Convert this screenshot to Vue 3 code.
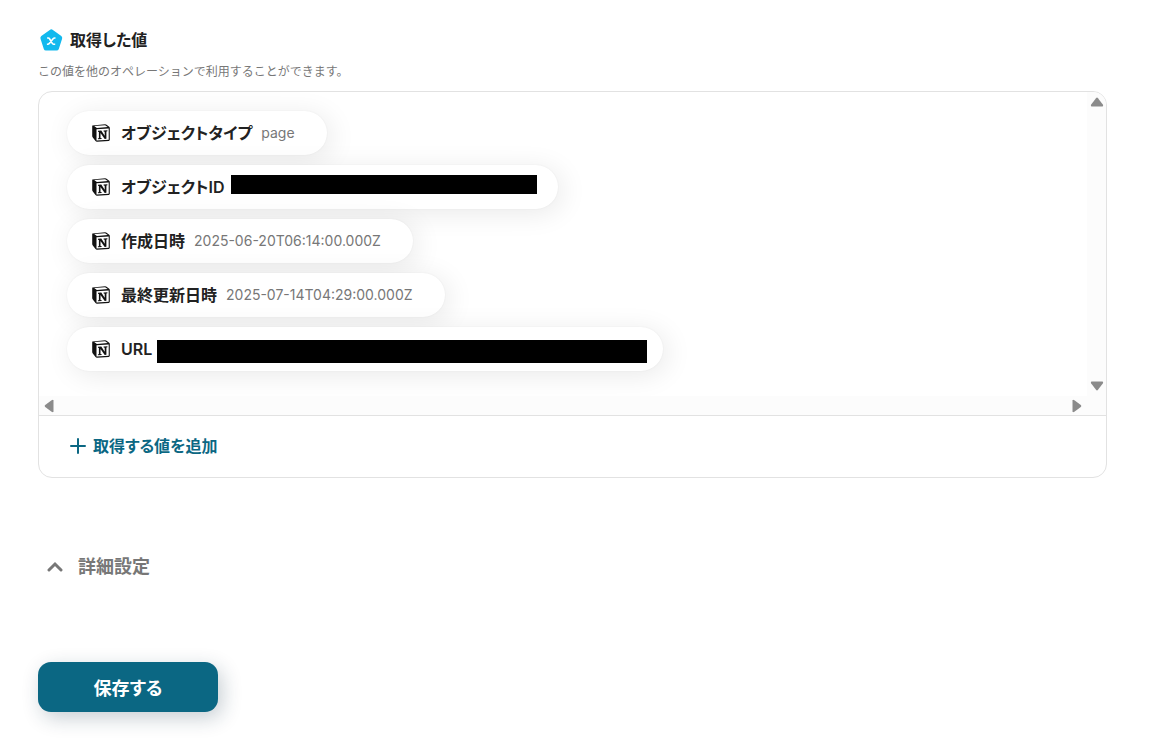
<template>
  <main class="page">
    <section class="outputs">
      <header class="heading">
        <svg class="heading-icon" viewBox="0 0 24 24" aria-hidden="true">
          <path
            d="M10.8 1.9 2.3 8.1Q1 9.1 1.5 10.7L4.8 21Q5.3 22.6 7 22.6H17.6Q19.3 22.6 19.8 21L23.1 10.7Q23.6 9.1 22.3 8.1L13.9 1.9Q12.3 .7 10.8 1.9Z"
            fill="#12b9ee"
          />
          <path
            d="M8.1 10H9.2Q10.2 10 10.7 11L13.1 15.2Q13.7 16.2 14.6 16.2H16.2M16.5 10H15.6Q14.8 10 14.1 10.8L10.3 15.4Q9.6 16.2 8.8 16.2H7.9"
            fill="none"
            stroke="#fff"
            stroke-width="1.6"
          />
        </svg>
        <h2 class="heading-title">取得した値</h2>
      </header>
      <p class="description">この値を他のオペレーションで利用することができます。</p>

      <div class="panel">
        <div class="scroll-area">
          <ul class="value-list">
            <li v-for="item in items" :key="item.label" class="value-chip">
              <svg class="chip-icon" viewBox="0 0 18 18" aria-hidden="true">
                <path
                  d="M.4 1.4 13.2.3Q14 .3 14.6.8L17.2 2.8Q17.8 3.3 17.8 4.1V15.7Q17.8 16.8 16.7 16.9L5 17.7Q4.1 17.7 3.5 17L.8 13.6Q.2 12.8.2 12V2.2Q.2 1.4.4 1.4Z"
                  fill="#111"
                />
                <path
                  d="M2.2 2.1 13.1 1.3 15.7 3.1 4.9 3.9ZM4.5 5.2 16.7 4.4V15.8L4.5 16.6Z"
                  fill="#fff"
                />
                <path
                  d="M6 6.8 9.3 6.6 12.7 11.8V7.8L11.6 7.5V6.5L15.4 6.3V7.2L14.4 7.6V14.7L12.7 14.9 8.5 8.9V13.9L9.7 14.2V15.1L5.9 15.3V14.4L6.9 14V8L6 7.7Z"
                  fill="#111"
                />
              </svg>
              <span class="chip-label">{{ item.label }}</span>
              <span v-if="item.value" class="chip-value">{{ item.value }}</span>
              <span v-else class="chip-masked" :style="{ width: item.width + 'px' }">
                <span class="mask" :class="item.mask"></span>
              </span>
            </li>
          </ul>
          <div class="track track-vertical">
            <button type="button" class="track-button" aria-label="上へスクロール">
              <svg viewBox="0 0 14 14"><path :d="arrow" /></svg>
            </button>
            <button type="button" class="track-button" aria-label="下へスクロール">
              <svg class="down" viewBox="0 0 14 14"><path :d="arrow" /></svg>
            </button>
          </div>
          <div class="track track-horizontal">
            <button type="button" class="track-button" aria-label="左へスクロール">
              <svg class="left" viewBox="0 0 14 14"><path :d="arrow" /></svg>
            </button>
            <button type="button" class="track-button" aria-label="右へスクロール">
              <svg class="right" viewBox="0 0 14 14"><path :d="arrow" /></svg>
            </button>
          </div>
          <div class="track"></div>
        </div>
        <footer class="panel-footer">
          <button type="button" class="add-button">
            <svg class="add-icon" viewBox="0 0 16 16" aria-hidden="true">
              <path d="M8 1V15M1 8H15" fill="none" stroke="#0b6783" stroke-width="2" stroke-linecap="round" />
            </svg>
            取得する値を追加
          </button>
        </footer>
      </div>
    </section>

    <button type="button" class="advanced" :aria-expanded="open" @click="open = !open">
      <svg class="advanced-icon" viewBox="0 0 16 16" aria-hidden="true">
        <path d="M2 11 8 5 14 11" fill="none" stroke="#777" stroke-width="3" stroke-linecap="round" />
      </svg>
      詳細設定
    </button>

    <button type="button" class="save">保存する</button>
  </main>
</template>

<script setup>
import { ref } from "vue";

const open = ref(false);

const arrow = "M6 3.2Q7 2 8 3.2L12.8 9.6Q13.8 11.5 12.4 11.5H1.6Q.2 11.5 1.2 9.6Z";

const items = [
  { label: "オブジェクトタイプ", value: "page" },
  { label: "オブジェクトID", width: 293, mask: "mask-id" },
  { label: "作成日時", value: "2025-06-20T06:14:00.000Z" },
  { label: "最終更新日時", value: "2025-07-14T04:29:00.000Z" },
  { label: "URL", width: 470, mask: "mask-url" }
];
</script>

<style>
body {
  margin: 0;
  background: #fff;
}
</style>

<style scoped>
.page {
  padding: 28px 43px 32px 38px;
  color: #222;
  font-family: Inter, "Noto Sans CJK JP", sans-serif;
  font-feature-settings: "palt";
}

button {
  border: 0;
  padding: 0;
  background: none;
  font-family: inherit;
  font-feature-settings: inherit;
  cursor: pointer;
}

svg {
  display: block;
  flex: none;
}

.heading {
  display: flex;
  align-items: center;
  gap: 7px;
  height: 24px;
  padding-left: 1px;
}

.heading-icon {
  width: 24px;
  height: 24px;
}

.heading-title {
  margin: 0;
  font-size: 16px;
  font-weight: 600;
  line-height: 24px;
}

.description {
  margin: 10px 0 9px;
  color: #777;
  font-size: 12px;
  font-feature-settings: normal;
  line-height: 20px;
}

.panel {
  overflow: hidden;
  border: 1px solid #e2e2e2;
  border-radius: 14px;
}

.scroll-area {
  display: grid;
  grid-template-columns: 1fr 19px;
  grid-template-rows: auto 19px;
}

.value-list {
  display: flex;
  flex-direction: column;
  align-items: flex-start;
  gap: 10px;
  margin: 0;
  padding: 19px 28px 25px;
  list-style: none;
  overflow: hidden;
}

.value-chip {
  display: flex;
  align-items: center;
  box-sizing: border-box;
  height: 44px;
  padding: 0 32px 0 25px;
  border-radius: 22px;
  background: #fff;
  box-shadow: 0 0 2px rgba(0, 0, 0, 0.06), 4px 4px 28px rgba(0, 0, 0, 0.09);
}

.chip-icon {
  width: 18px;
  height: 18px;
  margin-right: 11px;
}

.chip-label {
  margin-right: 9px;
  font-size: 16px;
  font-weight: 600;
  line-height: 24px;
}

.chip-value {
  color: #777;
  font-size: 14px;
  line-height: 24px;
}

.chip-masked {
  position: relative;
  height: 24px;
}

.mask {
  position: absolute;
  background: #000;
}

.mask-id {
  inset: 0 -11px 5px -2px;
}

.mask-url {
  inset: 3px -16px -2px -4px;
}

.track {
  display: flex;
  justify-content: space-between;
  background: #fcfcfc;
}

.track-vertical {
  flex-direction: column;
}

.track-button {
  display: flex;
  align-items: center;
  justify-content: center;
  width: 20px;
  height: 20px;
}

.track-button svg {
  width: 14px;
  height: 14px;
  fill: #8b8b8b;
}

.down {
  transform: rotate(180deg);
}

.left {
  transform: rotate(-90deg);
}

.right {
  transform: rotate(90deg);
}

.panel-footer {
  padding: 18px 31px 19px;
  border-top: 1px solid #e2e2e2;
}

.add-button {
  display: flex;
  align-items: center;
  gap: 7px;
  color: #0b6783;
  font-size: 16px;
  font-weight: 600;
  line-height: 24px;
}

.add-icon {
  width: 16px;
  height: 16px;
}

.advanced {
  display: flex;
  align-items: center;
  gap: 15px;
  margin: 75px 0 82px 9px;
  color: #777;
  font-size: 18px;
  font-weight: 600;
  line-height: 27px;
}

.advanced-icon {
  width: 16px;
  height: 16px;
}

.save {
  display: block;
  width: 180px;
  height: 50px;
  border-radius: 13px;
  background: #0b6783;
  box-shadow: 4px 6px 20px rgba(20, 50, 70, 0.24);
  color: #fff;
  font-size: 18px;
  font-weight: 700;
}
</style>
